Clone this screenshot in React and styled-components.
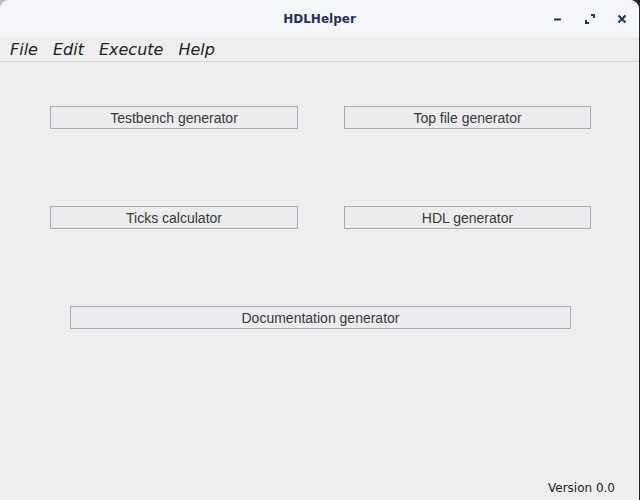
import React from "react";
import styled, { createGlobalStyle } from "styled-components";

const Global = createGlobalStyle`
  html, body { margin: 0; padding: 0; }
  body { width: 640px; height: 500px; overflow: hidden; }
`;

const Desktop = styled.div`
  width: 640px;
  height: 500px;
  background: linear-gradient(to right, #bdbdbd 0, #bdbdbd 320px, #242424 320px);
  display: flex;
`;

const Window = styled.div`
  flex: 1;
  margin-right: 1px;
  border-radius: 9px 9px 0 0;
  overflow: hidden;
  display: flex;
  flex-direction: column;
  background: #eeeeee;
`;

const TitleBar = styled.div`
  height: 37px;
  background: #f5f6fa;
  display: flex;
  align-items: center;
  justify-content: center;
  position: relative;
  font-family: "DejaVu Sans", sans-serif;
  font-weight: bold;
  font-size: 12px;
  color: #1f3553;
`;

const Controls = styled.div`
  position: absolute;
  right: 9px;
  top: 0;
  height: 37px;
  display: flex;
  align-items: center;
  gap: 16px;
`;

const Ctl = styled.svg`
  width: 16px;
  height: 16px;
  display: block;
`;

const MenuBar = styled.div`
  height: 24px;
  border-bottom: 1px solid #d4d4d4;
  display: flex;
  align-items: center;
  padding-left: 10px;
  gap: 15px;
  font-family: "DejaVu Sans", sans-serif;
  font-style: oblique;
  font-size: 16px;
  color: #222;
`;

const MenuItem = styled.span``;

const Body = styled.div`
  flex: 1;
  display: flex;
  flex-direction: column;
  padding: 44px 0 0 50px;
  position: relative;
`;

const Grid = styled.div`
  display: grid;
  grid-template-columns: 248px 247px;
  column-gap: 46px;
  row-gap: 77px;
`;

const Button = styled.button`
  width: ${(p) => p.$w || "100%"};
  height: 23px;
  margin: 0;
  padding: 0;
  box-sizing: border-box;
  border: 1px solid #a6a9bb;
  background: #ececee;
  font-family: "Liberation Sans", Arial, sans-serif;
  font-size: 14px;
  color: #383838;
  display: flex;
  align-items: center;
  justify-content: center;
`;

const DocRow = styled.div`
  margin-top: 77px;
  padding-left: 20px;
`;

const Version = styled.div`
  position: absolute;
  right: 24px;
  bottom: 5px;
  font-family: "DejaVu Sans", sans-serif;
  font-size: 12px;
  color: #222;
`;

export default function App() {
  return (
    <>
      <Global />
      <Desktop>
        <Window>
          <TitleBar>
            HDLHelper
            <Controls>
              <Ctl viewBox="0 0 16 16">
                <rect x="4" y="7.5" width="7" height="2" fill="#1f3553" />
              </Ctl>
              <Ctl viewBox="0 0 16 16">
                <path d="M9 4h3v3 M4 9v3h3" stroke="#1f3553" strokeWidth="2" fill="none" />
              </Ctl>
              <Ctl viewBox="0 0 16 16">
                <path d="M4.5 4.5l7 7 M11.5 4.5l-7 7" stroke="#1f3553" strokeWidth="2" fill="none" />
              </Ctl>
            </Controls>
          </TitleBar>
          <MenuBar>
            <MenuItem>File</MenuItem>
            <MenuItem>Edit</MenuItem>
            <MenuItem>Execute</MenuItem>
            <MenuItem>Help</MenuItem>
          </MenuBar>
          <Body>
            <Grid>
              <Button>Testbench generator</Button>
              <Button>Top file generator</Button>
              <Button>Ticks calculator</Button>
              <Button>HDL generator</Button>
            </Grid>
            <DocRow>
              <Button $w="501px">Documentation generator</Button>
            </DocRow>
            <Version>Version 0.0</Version>
          </Body>
        </Window>
      </Desktop>
    </>
  );
}
